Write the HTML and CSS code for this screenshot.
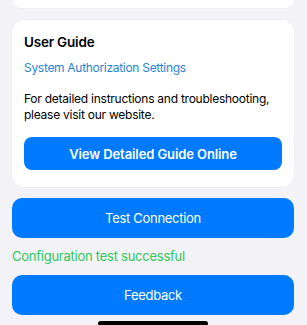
FILE: index.html
```html
<!DOCTYPE html>
<html>
<head>
<meta charset="utf-8">
<link rel="stylesheet" href="styles.css">
</head>
<body>
<div class="page">
  <div class="card card-top"></div>
  <div class="card guide">
    <div class="title">User Guide</div>
    <div class="link">System Authorization Settings</div>
    <div class="desc">For detailed instructions and troubleshooting, please visit our website.</div>
    <div class="btn btn-inner">View Detailed Guide Online</div>
  </div>
  <div class="btn btn-main">Test Connection</div>
  <div class="status">Configuration test successful</div>
  <div class="btn btn-main">Feedback</div>
</div>
<div class="home"></div>
</body>
</html>
```
FILE: styles.css
```css
html, body {
  margin: 0;
  padding: 0;
  background: #f2f2f7;
  font-family: Inter, "Liberation Sans", sans-serif;
  width: 307px;
  height: 325px;
  overflow: hidden;
}
.page {
  padding: 0 13px 0 12px;
  display: flex;
  flex-direction: column;
}
.card {
  background: #ffffff;
  border-radius: 12px;
  box-shadow: 0 0 0 0.5px rgba(0,0,0,0.04);
}
.card-top {
  height: 8px;
  border-radius: 0 0 12px 12px;
}
.guide {
  margin-top: 12px;
  height: 167px;
  box-sizing: border-box;
  padding: 13px 12px 0 12px;
  display: flex;
  flex-direction: column;
}
.title {
  font-size: 13.5px;
  font-weight: 600;
  line-height: 18px;
  letter-spacing: -0.2px;
  color: #000;
}
.link {
  margin-top: 9px;
  font-size: 12px;
  line-height: 16px;
  letter-spacing: -0.3px;
  color: #2a84d4;
}
.desc {
  margin-top: 15px;
  font-size: 12px;
  line-height: 16px;
  letter-spacing: -0.25px;
  color: #000;
}
.btn {
  background: #007aff;
  color: #fff;
  display: flex;
  align-items: center;
  justify-content: center;
}
.btn-inner {
  margin-top: 14px;
  height: 33px;
  border-radius: 8px;
  font-size: 13px;
  font-weight: 600;
  letter-spacing: -0.1px;
}
.btn-main {
  height: 40px;
  border-radius: 10px;
  font-size: 13px;
  font-weight: 400;
  letter-spacing: -0.3px;
}
.guide + .btn-main {
  margin-top: 11px;
}
.status {
  margin-top: 9px;
  height: 18px;
  line-height: 18px;
  font-size: 13px;
  letter-spacing: -0.25px;
  color: #34c759;
}
.status + .btn-main {
  margin-top: 10px;
}
.home {
  position: absolute;
  left: 98px;
  top: 321px;
  width: 110px;
  height: 5px;
  border-radius: 3px;
  background: #000;
}
```
